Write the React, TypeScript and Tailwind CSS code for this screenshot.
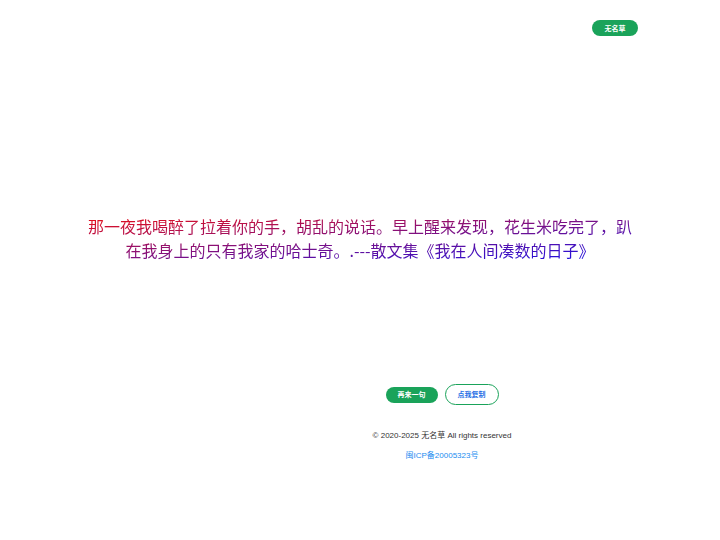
import React from 'react';

const App: React.FC = () => {
  const quote =
    '那一夜我喝醉了拉着你的手，胡乱的说话。早上醒来发现，花生米吃完了，趴在我身上的只有我家的哈士奇。.---散文集《我在人间凑数的日子》';

  return (
    <div
      className="w-[720px] h-[540px] bg-white flex flex-col"
      style={{ fontFamily: '"Liberation Sans", "Noto Sans CJK SC", sans-serif' }}
    >
      {/* top right author pill */}
      <div className="flex justify-end pt-[20px] pr-[82px]">
        <button className="w-[46px] h-[16px] rounded-full bg-[#1aa35a] text-white text-[7px] font-bold leading-none">
          无名草
        </button>
      </div>

      {/* quote */}
      <div className="mt-[178px] flex justify-center">
        <p
          className="w-[552px] text-center text-[16px] leading-[24px] bg-linear-to-br/srgb from-[#f01010] to-[#1010f0] bg-clip-text text-transparent"
          style={{ fontFamily: '"Noto Sans CJK SC", "Liberation Sans", sans-serif' }}
        >
          {quote}
        </p>
      </div>

      {/* actions */}
      <div className="mt-[122px] pl-[164px] flex flex-col items-center">
        <div className="flex items-center gap-[7px]">
          <button className="w-[52px] h-[16px] rounded-full bg-[#1aa35a] text-white text-[7px] font-bold leading-none">
            再来一句
          </button>
          <button className="w-[54px] h-[21px] rounded-full border border-[#1aa35a] bg-white text-[#1f6fe5] text-[7px] font-bold leading-none">
            点我复制
          </button>
        </div>
        <div className="mt-[25px] text-[8px] leading-[12px] text-[#333333]">
          © 2020-2025 无名草 All rights reserved
        </div>
        <a className="mt-[8px] text-[8px] leading-[12px] text-[#1b8cf0]">
          闽ICP备20005323号
        </a>
      </div>
    </div>
  );
};

export default App;
